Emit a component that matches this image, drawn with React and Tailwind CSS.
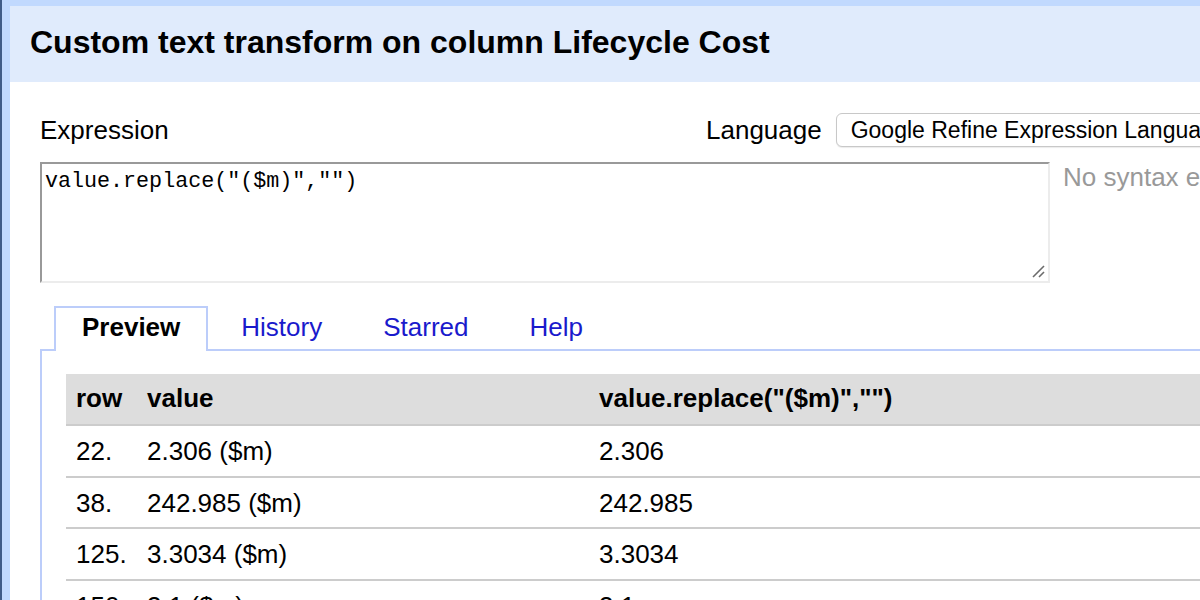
import React from "react";

const rows = [
  ["22.", "2.306 ($m)", "2.306"],
  ["38.", "242.985 ($m)", "242.985"],
  ["125.", "3.3034 ($m)", "3.3034"],
  ["150.", "3.1 ($m)", "3.1"],
];

export default function App() {
  return (
    <div
      className="flex w-[1200px] h-[600px] overflow-hidden bg-white text-black"
      style={{ fontFamily: '"Liberation Sans", Arial, Helvetica, sans-serif' }}
    >
      <div className="w-[2px] shrink-0 bg-[#405c88]" />
      <div className="w-[8px] shrink-0 bg-[#c1d9fe]" />
      <div className="flex flex-col flex-1 min-w-0">
        <div className="h-[6px] shrink-0 bg-[#c1d9fe]" />
        <div className="h-[76px] shrink-0 bg-[#e0ebfc] pl-[20px] pt-[20px]">
          <h1 className="text-[32px] leading-none font-bold whitespace-nowrap">
            Custom text transform on column Lifecycle Cost
          </h1>
        </div>
        <div className="flex-1 pl-[30px] pt-[31px]">
          {/* Expression / Language row */}
          <div className="flex items-center h-[34px] w-[1500px]">
            <div className="w-[666px] shrink-0 text-[26px] leading-[30px]">Expression</div>
            <div className="shrink-0 text-[26px] leading-[30px]">Language</div>
            <div className="ml-[14px] shrink-0 w-[440px] h-[34px] rounded-[6px] border border-[#c8c8c8] bg-white pl-[14px] flex items-center text-[23px] leading-[26px] whitespace-nowrap shadow-[0_1px_1px_rgba(0,0,0,0.08)]">
              Google Refine Expression Language (GREL)
            </div>
          </div>
          {/* Textarea row */}
          <div className="flex mt-[15px] w-[1500px]">
            <div className="relative w-[1010px] h-[121px] shrink-0 border-2 border-t-[#999999] border-l-[#999999] border-r-[#ececec] border-b-[#ececec] pl-[3px] pt-[2px]">
              <div
                className="text-[21.7px] whitespace-pre"
                style={{ fontFamily: '"Liberation Mono", "Courier New", monospace' }}
              >
                value.replace("($m)","")
              </div>
              <svg
                className="absolute right-[3px] bottom-[3px]"
                width="14"
                height="14"
                viewBox="0 0 14 14"
              >
                <line x1="2" y1="13" x2="13" y2="2" stroke="#6b6b6b" strokeWidth="1.6" />
                <line x1="8" y1="13" x2="13" y2="8" stroke="#6b6b6b" strokeWidth="1.6" />
              </svg>
            </div>
            <div className="ml-[13px] text-[26px] leading-[30px] text-[#999999] whitespace-nowrap">
              No syntax error.
            </div>
          </div>
          {/* Tabs */}
          <div className="mt-[23px] w-[1500px]">
            <div className="relative z-10 flex items-end ml-[14px] gap-[5px] text-[26px] leading-[30px]">
              <div className="border-2 border-b-0 border-[#bccdfa] bg-white px-[26px] pt-[4px] pb-[9px] mb-[-2px] font-bold">
                Preview
              </div>
              <div className="border-2 border-b-0 border-transparent px-[26px] pt-[4px] pb-[7px] text-[#1a1acc]">
                History
              </div>
              <div className="border-2 border-b-0 border-transparent px-[26px] pt-[4px] pb-[7px] text-[#1a1acc]">
                Starred
              </div>
              <div className="border-2 border-b-0 border-transparent px-[26px] pt-[4px] pb-[7px] text-[#1a1acc]">
                Help
              </div>
            </div>
            <div className="border-t-2 border-l-2 border-[#bccdfa] pl-[24px] pt-[23px] h-[300px]">
              <div className="grid grid-cols-[71px_452px_1fr] text-[26px] leading-[30px]">
                <div className="h-[52px] bg-[#dddddd] border-b-2 border-[#cccccc] pl-[10px] pt-[9px] font-bold">row</div>
                <div className="h-[52px] bg-[#dddddd] border-b-2 border-[#cccccc] pl-[10px] pt-[9px] font-bold">value</div>
                <div className="h-[52px] bg-[#dddddd] border-b-2 border-[#cccccc] pl-[10px] pt-[9px] font-bold whitespace-nowrap">value.replace("($m)","")</div>
                {rows.map((r, i) => (
                  <React.Fragment key={i}>
                    <div className="h-[51.7px] border-b-2 border-[#cccccc] pl-[10px] pt-[10px] whitespace-nowrap">{r[0]}</div>
                    <div className="h-[51.7px] border-b-2 border-[#cccccc] pl-[10px] pt-[10px] whitespace-nowrap">{r[1]}</div>
                    <div className="h-[51.7px] border-b-2 border-[#cccccc] pl-[10px] pt-[10px] whitespace-nowrap">{r[2]}</div>
                  </React.Fragment>
                ))}
              </div>
            </div>
          </div>
        </div>
      </div>
    </div>
  );
}
